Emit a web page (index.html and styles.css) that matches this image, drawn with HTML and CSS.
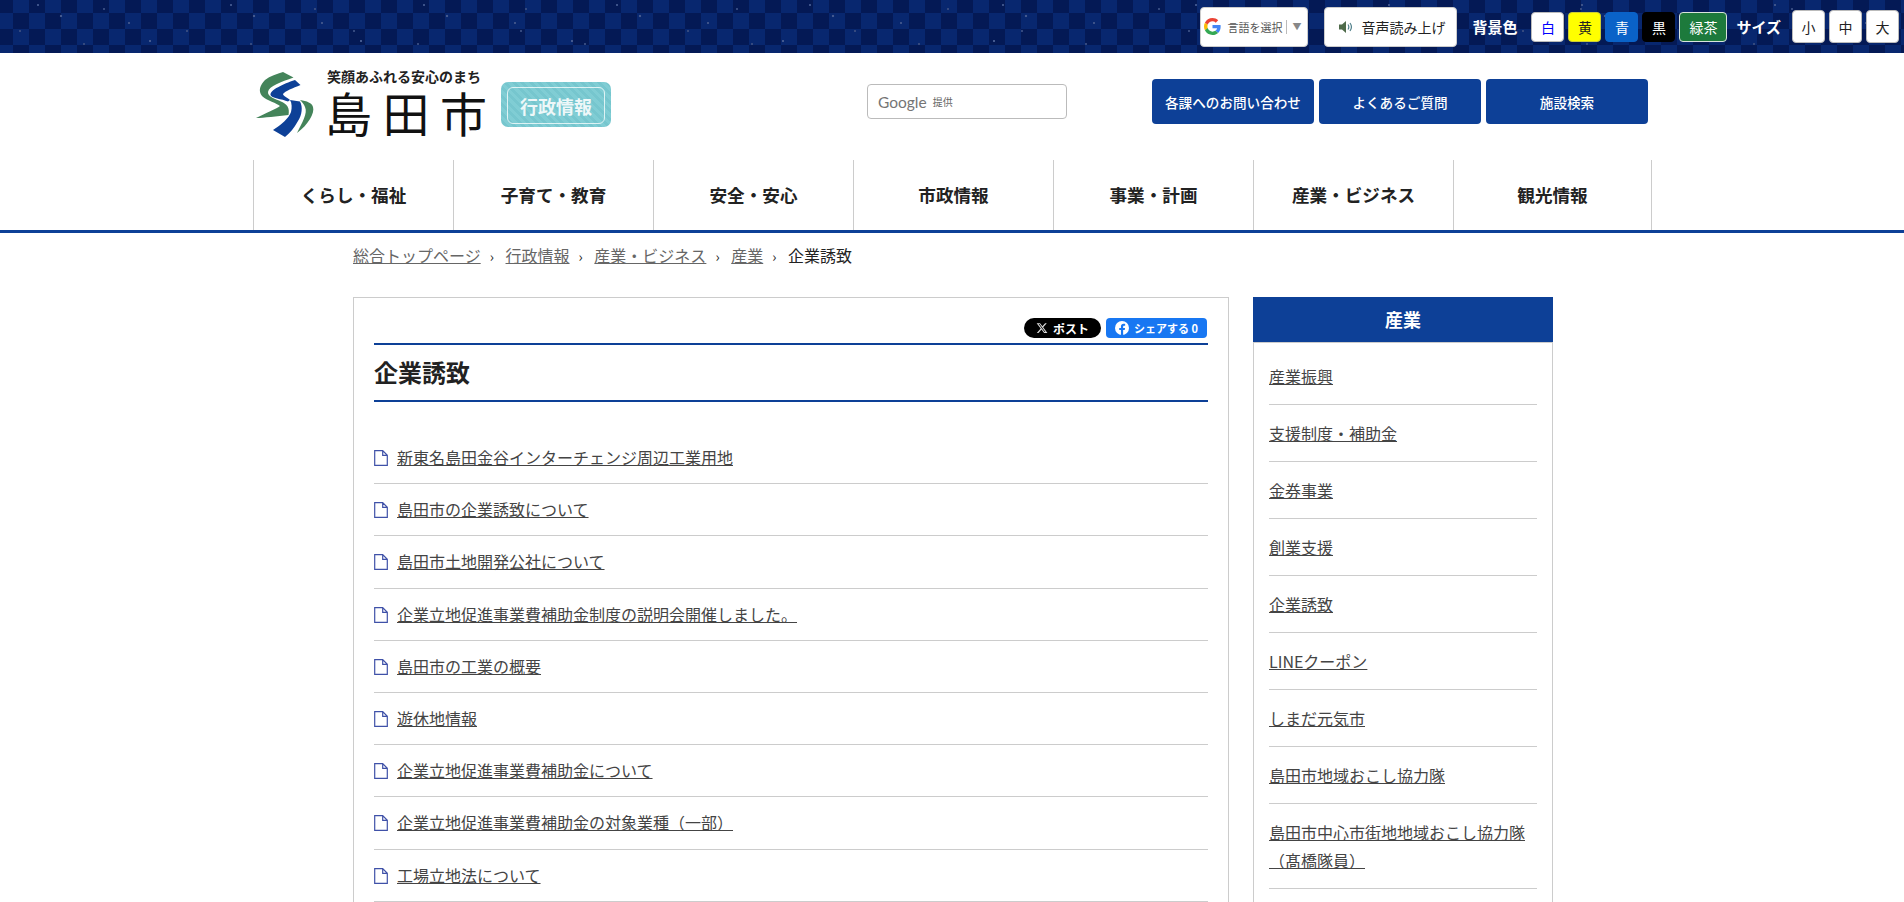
FILE: index.html
```html
<!DOCTYPE html>
<html lang="ja">
<head>
    <meta charset="UTF-8">
    <title>企業誘致 - 島田市</title>
    <link rel="stylesheet" href="styles.css">
</head>
<body>
    <div class="topbar">
        <div class="translate">
            <svg class="g-icon" viewBox="0 0 48 48">
                <path fill="#EA4335" d="M24 9.5c3.54 0 6.71 1.22 9.21 3.6l6.85-6.85C35.9 2.38 30.47 0 24 0 14.62 0 6.51 5.38 2.56 13.22l7.98 6.19C12.43 13.72 17.74 9.5 24 9.5z"/>
                <path fill="#4285F4" d="M46.98 24.55c0-1.57-.15-3.09-.38-4.55H24v9.02h12.94c-.58 2.96-2.26 5.48-4.78 7.18l7.73 6c4.51-4.18 7.09-10.36 7.09-17.65z"/>
                <path fill="#FBBC05" d="M10.53 28.59c-.48-1.45-.76-2.99-.76-4.59s.27-3.14.76-4.59l-7.98-6.19C.92 16.46 0 20.12 0 24c0 3.88.92 7.54 2.56 10.78l7.97-6.19z"/>
                <path fill="#34A853" d="M24 48c6.48 0 11.93-2.13 15.89-5.81l-7.73-6c-2.15 1.45-4.92 2.3-8.16 2.3-6.26 0-11.57-4.22-13.47-9.91l-7.98 6.19C6.51 42.62 14.62 48 24 48z"/>
            </svg>
            <span class="translate-label">言語を選択</span>
            <span class="translate-arrow">▼</span>
        </div>
        <div class="voice">
            <svg class="voice-icon" viewBox="0 0 14 14">
                <path fill="#4f6b4a" d="M0 4.5h3L7 1v12L3 9.500H0z"/>
                <path fill="none" stroke="#4f7f8a" stroke-width="1.200" d="M9 4.500c1 1.500 1 3.500 0 5M11 3c1.800 2.500 1.800 5.500 0 8"/>
            </svg>
            <span>音声読み上げ</span>
        </div>
        <span class="bar-label first">背景色</span>
        <span class="swatch sw-white">白</span>
        <span class="swatch sw-yellow">黄</span>
        <span class="swatch sw-blue">青</span>
        <span class="swatch sw-black">黒</span>
        <span class="swatch sw-green">緑茶</span>
        <span class="bar-label">サイズ</span>
        <span class="size-btn">小</span>
        <span class="size-btn">中</span>
        <span class="size-btn">大</span>
    </div>

    <header class="header">
        <div class="logo">
            <svg class="logo-mark" viewBox="0 0 70 80">
                <path fill="#44845a" d="M33 7L43.500 12.500C31 17 19 21 18 27C17.500 32 26 34 31 36.500C37 39 40 43 38.500 50C27 51 14 53 6 53C16 48 26 44 30 41C27 38 17 36 12 31C8 26 10 20 15 15C20 11 27 9 33 7Z"/>
                <path fill="#0d4097" d="M45 15L50.500 20C43 23 35 26 33 29C33 31 38 33 40 35L38 36.500C32 34 21 33 20.500 30C20 25 33 19 45 15Z"/>
                <path fill="#0d4097" d="M40 35L50 36.500C53 42 52 50 48 56C44 63 40 68 35 72L23 65C31 60 39 53 41 47C42 43 42 38 40 35Z"/>
                <path fill="#44845a" d="M50 35C57 36 62 38 63 42C65 48 58 60 47 68C52 58 58 48 55 42C54 39 52 37 50 35Z"/>
            </svg>
            <div class="logo-text">
                <div class="tagline">笑顔あふれる安心のまち</div>
                <div class="city">島田市</div>
            </div>
            <div class="badge"><span>行政情報</span></div>
        </div>
        <div class="search"><span class="google">Google</span><span class="provided">提供</span></div>
        <div class="head-links">
            <a class="head-btn">各課へのお問い合わせ</a>
            <a class="head-btn">よくあるご質問</a>
            <a class="head-btn">施設検索</a>
        </div>
    </header>

    <nav class="gnav">
        <ul>
            <li>くらし・福祉</li>
            <li>子育て・教育</li>
            <li>安全・安心</li>
            <li>市政情報</li>
            <li>事業・計画</li>
            <li>産業・ビジネス</li>
            <li>観光情報</li>
        </ul>
    </nav>

    <div class="wrap">
        <div class="crumbs">
            <a href="#">総合トップページ</a><i>›</i>
            <a href="#">行政情報</a><i>›</i>
            <a href="#">産業・ビジネス</a><i>›</i>
            <a href="#">産業</a><i>›</i>
            <span>企業誘致</span>
        </div>

        <div class="columns">
            <main class="main-box">
                <div class="share">
                    <span class="share-x">
                        <svg viewBox="0 0 24 24"><path fill="#ddd" d="M18.244 2.25h3.308l-7.227 8.26 8.502 11.24H16.170l-5.214-6.817L4.990 21.750H1.680l7.730-8.835L1.254 2.250H8.080l4.713 6.231zm-1.161 17.520h1.833L7.084 4.126H5.117z"/></svg>
                        ポスト
                    </span>
                    <span class="share-fb">
                        <svg viewBox="0 0 16 16"><circle cx="8" cy="8" r="8" fill="#fff"/><path fill="#1877f2" d="M11.100 10.300l.4-2.300H9.300V6.500c0-.6.300-1.200 1.300-1.200h1V3.300s-.9-.2-1.800-.2c-1.800 0-3 1.100-3 3.100V8h-2v2.300h2V16h2.500v-5.700z"/></svg>
                        シェアする 0
                    </span>
                </div>
                <h1 class="title">企業誘致</h1>
                <ul class="page-list">
                    <li><a href="#">新東名島田金谷インターチェンジ周辺工業用地</a></li>
                    <li><a href="#">島田市の企業誘致について</a></li>
                    <li><a href="#">島田市土地開発公社について</a></li>
                    <li><a href="#">企業立地促進事業費補助金制度の説明会開催しました。</a></li>
                    <li><a href="#">島田市の工業の概要</a></li>
                    <li><a href="#">遊休地情報</a></li>
                    <li><a href="#">企業立地促進事業費補助金について</a></li>
                    <li><a href="#">企業立地促進事業費補助金の対象業種（一部）</a></li>
                    <li><a href="#">工場立地法について</a></li>
                </ul>
            </main>

            <aside class="side">
                <h2 class="side-title">産業</h2>
                <ul class="side-list">
                    <li><a href="#">産業振興</a></li>
                    <li><a href="#">支援制度・補助金</a></li>
                    <li><a href="#">金券事業</a></li>
                    <li><a href="#">創業支援</a></li>
                    <li><a href="#">企業誘致</a></li>
                    <li><a href="#">LINEクーポン</a></li>
                    <li><a href="#">しまだ元気市</a></li>
                    <li><a href="#">島田市地域おこし協力隊</a></li>
                    <li><a href="#">島田市中心市街地地域おこし協力隊（髙橋隊員）</a></li>
                </ul>
            </aside>
        </div>
    </div>
</body>
</html>
```

FILE: styles.css
```css
html, body {
    height: 902px;
    overflow: hidden;
}

body {
    margin: 0;
    font-family: "Noto Sans CJK JP", "Noto Sans", sans-serif;
    font-size: 16px;
    color: #222;
    background: #fff;
}

ul {
    list-style: none;
    margin: 0;
    padding: 0;
}

a {
    color: inherit;
}

/* top bar */
.topbar {
    height: 53px;
    display: flex;
    align-items: center;
    justify-content: flex-end;
    padding-right: 5px;
    box-sizing: border-box;
    background:
        radial-gradient(circle at 38px 5px, #3c5289 0 .8px, transparent 1.400px) 0 0 / 193px 53px,
        radial-gradient(circle at 61px 16px, #43598f 0 1px, transparent 1.600px) 0 0 / 193px 53px,
        radial-gradient(circle at 104px 9px, #34497f 0 .8px, transparent 1.400px) 0 0 / 211px 53px,
        radial-gradient(circle at 129px 23px, #3c5289 0 1px, transparent 1.500px) 0 0 / 193px 53px,
        radial-gradient(circle at 20px 31px, #34497f 0 .8px, transparent 1.300px) 0 0 / 167px 53px,
        radial-gradient(circle at 150px 41px, #43598f 0 1px, transparent 1.500px) 0 0 / 211px 53px,
        radial-gradient(circle at 84px 44px, #34497f 0 .8px, transparent 1.300px) 0 0 / 167px 53px,
        repeating-conic-gradient(#08276f 0 25%, #041955 0 50%) -3px -3px / 32px 32px;
}

.translate {
    width: 108px;
    height: 40px;
    box-sizing: border-box;
    padding-left: 3px;
    display: flex;
    align-items: center;
    background: #fff;
    border: 1px solid #ccc;
    border-radius: 4px;
}

.g-icon {
    width: 17px;
    height: 17px;
    margin-right: 6px;
}

.translate-label {
    font-size: 11px;
    color: #555;
}

.translate-arrow {
    font-size: 9px;
    color: #888;
    margin-left: 4px;
    padding-left: 5px;
    border-left: 1px solid #bbb;
    line-height: 14px;
}

.voice {
    width: 133px;
    height: 40px;
    margin-left: 16px;
    box-sizing: border-box;
    display: flex;
    align-items: center;
    padding-left: 14px;
    gap: 8px;
    font-size: 14px;
    background: #fff;
    border: 1px solid #ccc;
    border-radius: 4px;
}

.voice-icon {
    width: 14px;
    height: 14px;
}

.bar-label {
    color: #fff;
    font-weight: 700;
    font-size: 15px;
    margin: 0 7px 0 9px;
}

.bar-label.first {
    margin-left: 15px;
    margin-right: 14px;
}

.swatch {
    height: 30px;
    width: 33px;
    box-sizing: border-box;
    margin-right: 4px;
    display: flex;
    align-items: center;
    justify-content: center;
    font-size: 14px;
    border-radius: 4px;
    border: 1px solid #bbb;
}

.sw-white { background: #fff; color: #00f; }
.sw-yellow { background: #ff0; color: #222; border-color: #cc3; }
.sw-blue { background: #0a62c8; color: #fff; border-color: #0a62c8; }
.sw-black { background: #000; color: #fff; border-color: #000; }
.sw-green { background: #1d7a3c; color: #fff; width: 48px; margin-right: 0; border-color: #d8e4dc; }

.size-btn {
    height: 33px;
    width: 33px;
    box-sizing: border-box;
    margin-left: 4px;
    display: flex;
    align-items: center;
    justify-content: center;
    font-size: 14px;
    background: #fff;
    border: 1px solid #bbb;
    border-radius: 4px;
}

/* header */
.header {
    width: 1400px;
    height: 107px;
    margin: 0 auto;
    display: flex;
    align-items: flex-start;
}

.logo {
    width: 615px;
    display: flex;
    align-items: flex-start;
}

.logo-mark {
    width: 70px;
    height: 80px;
    margin: 12px 0 0 -2px;
}

.logo-text {
    margin: 14px 0 0 7px;
    width: 174px;
}

.tagline {
    font-size: 14px;
    font-weight: 700;
    line-height: 18px;
    white-space: nowrap;
}

.city {
    font-size: 47px;
    letter-spacing: 10.500px;
    line-height: 50px;
    margin: 2px 0 0 -2px;
    color: #111;
}

.badge {
    width: 110px;
    height: 45px;
    margin-top: 29px;
    padding: 5px 6px;
    box-sizing: border-box;
    border-radius: 7px;
    background: repeating-linear-gradient(45deg, #80cdd4 0 3px, #76c6ce 3px 6px);
}

.badge span {
    display: flex;
    align-items: center;
    justify-content: center;
    height: 100%;
    border: 1px solid rgba(255, 255, 255, .75);
    border-radius: 6px;
    color: rgba(255, 255, 255, .88);
    font-size: 18px;
    font-weight: 700;
}

.search {
    width: 200px;
    height: 35px;
    margin-top: 31px;
    box-sizing: border-box;
    border: 1px solid #bbb;
    border-radius: 4px;
    display: flex;
    align-items: center;
    padding-left: 10px;
}

.google {
    font-family: Lato, sans-serif;
    font-size: 15.500px;
    color: #757575;
}

.provided {
    font-size: 10px;
    color: #666;
    margin-left: 6px;
}

.head-links {
    display: flex;
    gap: 5px;
    margin: 26px 0 0 85px;
}

.head-btn {
    width: 162px;
    height: 45px;
    display: flex;
    align-items: center;
    justify-content: center;
    font-size: 13.600px;
    font-weight: 500;
    color: #fff;
    background: #0d4097;
    border-radius: 4px;
}

/* global nav */
.gnav {
    height: 70px;
    border-bottom: 3px solid #0d4097;
}

.gnav ul {
    width: 1400px;
    height: 70px;
    margin-left: 253px;
    display: flex;
}

.gnav li {
    width: 200px;
    box-sizing: border-box;
    display: flex;
    align-items: center;
    justify-content: center;
    padding-bottom: 2px;
    font-size: 17.600px;
    font-weight: 700;
    border-left: 1px solid #ccc;
}

.gnav li:last-child {
    width: 199px;
    border-right: 1px solid #ccc;
}

/* content */
.wrap {
    width: 1200px;
    margin-left: 353px;
}

.crumbs {
    height: 64px;
    padding-top: 9px;
    box-sizing: border-box;
    line-height: 26px;
    color: #222;
    white-space: nowrap;
}

.crumbs a {
    color: #666;
}

.crumbs i {
    font-style: normal;
    font-size: 14px;
    margin: 0 8px 0 9px;
}

.columns {
    display: flex;
    justify-content: space-between;
    align-items: flex-start;
}

.main-box {
    width: 876px;
    box-sizing: border-box;
    border: 1px solid #ccc;
    padding: 20px 20px 0;
}

.share {
    display: flex;
    justify-content: flex-end;
    gap: 5px;
    height: 25px;
    padding-right: 1px;
}

.share-x,
.share-fb {
    height: 20px;
    display: flex;
    align-items: center;
    justify-content: center;
    color: #fff;
    font-weight: 700;
    font-size: 11px;
}

.share-x {
    width: 77px;
    gap: 5px;
    font-size: 12px;
    background: #000;
    border-radius: 10px;
}

.share-x svg {
    width: 12px;
    height: 12px;
}

.share-fb {
    width: 101px;
    gap: 5px;
    background: #1877f2;
    border-radius: 4px;
}

.share-fb svg {
    width: 14px;
    height: 14px;
}

.title {
    margin: 0 0 30px;
    height: 55px;
    line-height: 53px;
    font-size: 24px;
    font-weight: 700;
    border-top: 2px solid #0d4097;
    border-bottom: 2px solid #0d4097;
}

.page-list li {
    padding: 13px 0 13px 23px;
    line-height: 25.200px;
    border-bottom: 1px solid #ccc;
    color: #444;
    background: url("data:image/svg+xml,%3Csvg xmlns='http://www.w3.org/2000/svg' width='14' height='16'%3E%3Cpath d='M.7.7h8l4.600 4.600v10H.7zM8.700.7v4.600h4.600' fill='none' stroke='%233f51a8' stroke-width='1.200'/%3E%3C/svg%3E") no-repeat 0 18px;
}

.side {
    width: 300px;
}

.side-title {
    margin: 0;
    height: 45px;
    line-height: 45px;
    background: #0d4097;
    color: #fff;
    text-align: center;
    font-size: 18px;
    font-weight: 700;
}

.side-list {
    border: 1px solid #ccc;
    padding: 5px 15px 60px;
}

.side-list li {
    padding: 14px 0;
    line-height: 28px;
    border-bottom: 1px solid #ccc;
    color: #444;
}
```
